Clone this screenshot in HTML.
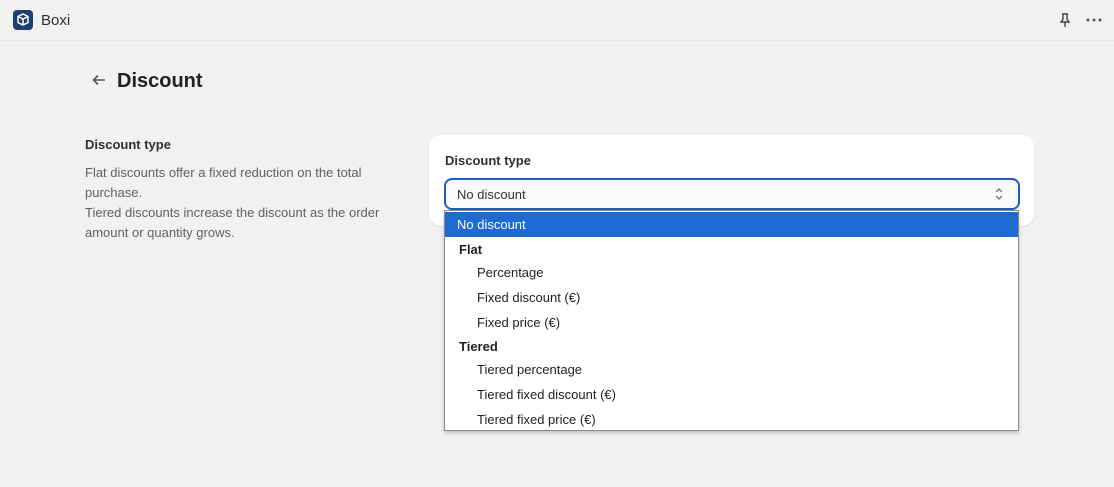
<!DOCTYPE html>
<html><head><style>
*{box-sizing:border-box;margin:0;padding:0}
body{width:1114px;height:487px;background:#f1f1f1;font-family:"Liberation Sans",sans-serif;color:#303030;position:relative;overflow:hidden;font-size:13px}
.top{height:41px;border-bottom:1px solid #e6e6e6;position:relative}
.logo{position:absolute;left:13px;top:10px;width:20px;height:20px;background:#1d3f73;border-radius:4px}
.abs{position:absolute}
.card{position:absolute;left:429px;top:135px;width:605px;height:91px;background:#fff;border-radius:12px;box-shadow:0 1px 1px rgba(0,0,0,.1)}
.sel{position:absolute;left:444px;top:178px;width:576px;height:32px;border:2px solid #1d5fb8;border-radius:8px;background:#fafafa}
.dd{position:absolute;left:444px;top:210px;width:575px;height:221px;background:#fff;border:1px solid #8a8a8a;box-shadow:0 2px 4px rgba(0,0,0,.2)}
.dd div{position:absolute;left:0;right:0;height:25px;line-height:25px;font-size:13px;color:#222}
</style></head><body>
<div class="top">
<div class="logo"><svg width="20" height="20" viewBox="0 0 20 20"><path d="M10 4l5 2.5v6L10 15l-5-2.5v-6z M5 6.5L10 9l5-2.5 M10 9v6" fill="none" stroke="#fff" stroke-width="1.5"/></svg></div>
<div class="abs" style="left:41px;top:12px;font-size:15px;color:#303030">Boxi</div>
<svg class="abs" style="left:1058px;top:12px" width="14" height="16" viewBox="0 0 14 16"><path d="M4 2h6M5 2v5L3 10h8L9 7V2M7 10v5" fill="none" stroke="#444" stroke-width="1.4"/></svg>
<svg class="abs" style="left:1086px;top:18px" width="16" height="4" viewBox="0 0 16 4"><circle cx="2" cy="2" r="1.5" fill="#555"/><circle cx="8" cy="2" r="1.5" fill="#555"/><circle cx="14" cy="2" r="1.5" fill="#555"/></svg>
</div>
<svg class="abs" style="left:92px;top:74px" width="14" height="12" viewBox="0 0 14 12"><path d="M13 6H2M6 1.5L1.5 6 6 10.5" fill="none" stroke="#555" stroke-width="1.6"/></svg>
<div class="abs" style="left:117px;top:70px;font-size:20px;font-weight:bold;color:#222">Discount</div>
<div class="abs" style="left:85px;top:137px;font-size:13px;font-weight:bold">Discount type</div>
<div class="abs" style="left:85px;top:163px;width:310px;font-size:13px;line-height:20px;color:#616161">Flat discounts offer a fixed reduction on the total purchase.<br>Tiered discounts increase the discount as the order amount or quantity grows.</div>
<div class="card"></div>
<div class="abs" style="left:445px;top:153px;font-size:13px;font-weight:bold">Discount type</div>
<div class="sel"><span class="abs" style="left:11px;top:7px;font-size:13px;color:#333">No discount</span><svg class="abs" style="right:14px;top:7px" width="10" height="14" viewBox="0 0 10 14"><path d="M2 5l3-3 3 3M2 9l3 3 3-3" fill="none" stroke="#666" stroke-width="1.2"/></svg></div>
<div class="dd">
<div style="top:1px;background:#1e6ad3;color:#fff;padding-left:12px">No discount</div>
<div style="top:26px;padding-left:14px;font-weight:bold">Flat</div>
<div style="top:49px;padding-left:32px">Percentage</div>
<div style="top:74px;padding-left:32px">Fixed discount (€)</div>
<div style="top:99px;padding-left:32px">Fixed price (€)</div>
<div style="top:123px;padding-left:14px;font-weight:bold">Tiered</div>
<div style="top:146px;padding-left:32px">Tiered percentage</div>
<div style="top:171px;padding-left:32px">Tiered fixed discount (€)</div>
<div style="top:196px;padding-left:32px">Tiered fixed price (€)</div>
</div>
</body></html>
